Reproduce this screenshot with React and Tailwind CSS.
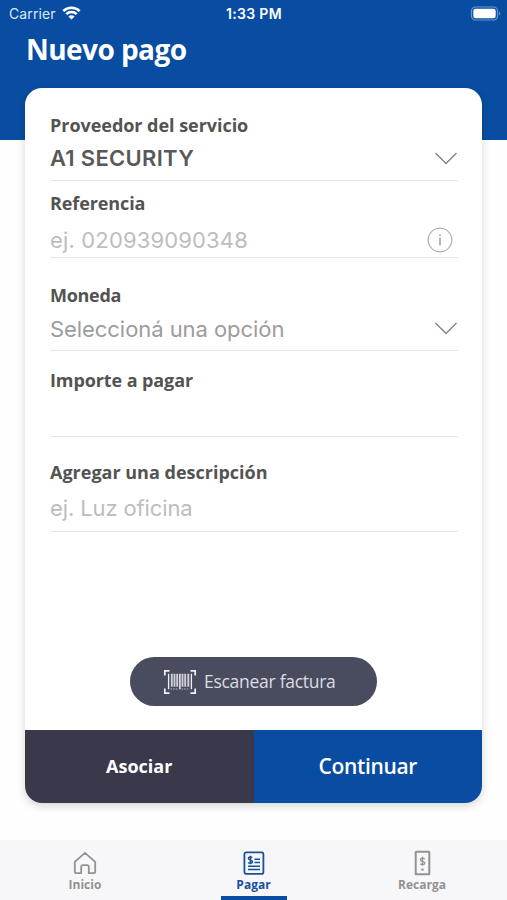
const brand = "font-['Open_Sans','Noto_Sans',sans-serif]";

function Chevron() {
  return (
    <svg className="h-4 w-6 shrink-0" viewBox="0 0 24 16" fill="none" stroke="#868686" strokeWidth="1.5">
      <path d="M1.5 3 12 13.5 22.5 3" />
    </svg>
  );
}

function Info() {
  return (
    <svg className="mr-[5px] h-[26px] w-[26px] shrink-0" viewBox="0 0 26 26" fill="none" stroke="#b4b4b4">
      <circle cx="13" cy="13" r="11.8" strokeWidth="1.3" />
      <path d="M13 10.5v8M13 7.3v1.8" stroke="#969696" strokeWidth="1.4" />
    </svg>
  );
}

function Field({ label, labelClass = "", value, valueClass, rowClass, className, icon }) {
  return (
    <div className={`shrink-0 border-b border-[#e6e6e6] ${className}`}>
      <div className={`h-5 text-[18px] leading-5 font-bold whitespace-nowrap text-[#535353] ${labelClass}`}>
        <span>{label}</span>
      </div>
      <div className={`flex h-7 items-center justify-between font-['Inter',sans-serif] text-[22px] leading-7 whitespace-nowrap ${rowClass}`}>
        <span className={valueClass}>{value}</span>
        {icon}
      </div>
    </div>
  );
}

function StatusBar() {
  return (
    <div className="grid h-7 grid-cols-3 items-center pr-[6px] pl-[9px] font-['Inter',sans-serif] text-[14px] leading-7 text-white">
      <div className="flex items-center gap-[6px]">
        <span className="tracking-[0.1px] text-[#dce8f8]">Carrier</span>
        <svg className="-mt-[2px] h-[14px] w-[19px]" viewBox="0 0 19 14" fill="none" stroke="#fff" strokeWidth="2.5">
          <path d="M1.3 5.1a11.6 11.6 0 0 1 16.4 0M4.3 8.1a7.4 7.4 0 0 1 10.4 0" />
          <path d="M9.5 13.6 6.4 10.5a4.4 4.4 0 0 1 6.2 0z" fill="#fff" stroke="none" />
        </svg>
      </div>
      <span className="-ml-[2px] text-center text-[14px] font-semibold tracking-[0.3px]">1:33 PM</span>
      <svg className="-mt-px h-[15px] w-[31px] justify-self-end" viewBox="0 0 31 15" fill="none">
        <rect x="1.5" y="1" width="26" height="13" rx="4" stroke="#6c96cb" strokeWidth="1.2" />
        <rect x="3.3" y="2.8" width="22.4" height="9.4" rx="2.2" fill="#fff" />
        <path d="M29 5.3c1.6.7 1.6 3.7 0 4.4z" fill="#6c96cb" />
      </svg>
    </div>
  );
}

function ScanIcon() {
  return (
    <svg className="h-[26px] w-[34px]" viewBox="0 0 34 26" fill="none" stroke="#eeeef4">
      <path d="M1.8 6.5V1.8H6.5M27.5 1.8h4.7v4.7M32.2 19.5v4.7h-4.7M6.5 24.2H1.8v-4.7" strokeWidth="1.7" />
      <path d="M5.6 4.8v15.4M28.4 4.8v15.4" strokeWidth="1.3" />
      <path d="M8.8 4.8v13M11.5 4.8v13M14.2 4.8v13M19.5 4.8v13M22.2 4.8v13M25.3 4.8v13" strokeWidth="1.9" stroke="#cfcfda" />
      <path d="M16.9 4.8v15.4" strokeWidth="1.5" />
      <path d="M7.5 20h8M18.5 20h8" strokeWidth="1" strokeDasharray="1.6 1" stroke="#b5b5c3" />
    </svg>
  );
}

function HomeIcon() {
  return (
    <svg className="h-6 w-6" viewBox="0 0 24 24" fill="none" stroke="#929292" strokeWidth="1.8" strokeLinejoin="round">
      <path d="M1.8 10.8 12 1.8l10.2 9v10.2a1.2 1.2 0 0 1-1.2 1.2h-5.2v-6.2a1.8 1.8 0 0 0-1.8-1.8h-4a1.8 1.8 0 0 0-1.8 1.8v6.2H3a1.2 1.2 0 0 1-1.2-1.2z" />
    </svg>
  );
}

function PayIcon() {
  return (
    <svg className="h-6 w-6" viewBox="0 0 24 24" fill="none" stroke="#17509f" strokeWidth="1.8">
      <rect x="2.4" y="1.3" width="19" height="21.6" rx="2" />
      <path d="M10.3 6.6C8.8 5.4 6.3 5.8 6.4 7.5c.1 1.7 3.9 1.4 4 3.2.1 1.8-2.8 2-4.3.8M8.4 4.7v8.6" strokeWidth="1.5" />
      <path d="M12.5 8.2H18M12.5 11.5H18M6 15.2h12M6 18.5h12" strokeWidth="1.6" />
    </svg>
  );
}

function TopUpIcon() {
  return (
    <svg className="h-[26px] w-[17px]" viewBox="0 0 17 26" fill="none" stroke="#929292">
      <rect x="1.7" y="1.7" width="13.6" height="22.6" rx="0.6" strokeWidth="2" />
      <path d="M10.7 8.9C9.3 7.6 6.3 7.9 6.4 9.7c.1 1.8 4.2 1.4 4.3 3.3.1 1.9-2.9 2.2-4.5.8M8.5 6.8v9" strokeWidth="1.3" />
      <path d="M7.3 19.6h2.4" strokeWidth="2" />
    </svg>
  );
}

function Tab({ icon, label, active }) {
  return (
    <div className={`relative flex w-[168.5px] flex-col items-center ${active ? "text-[#17509f]" : "text-[#929292]"}`}>
      <div className="mt-[10px] flex h-[26px] items-center">{icon}</div>
      <span className="mt-px h-4 text-[12px] leading-4 font-bold">{label}</span>
      {active && <div className="absolute bottom-0 h-[4px] w-[66px] bg-[#0a4ea3]" />}
    </div>
  );
}

export default function App() {
  return (
    <div className={`flex h-[900px] w-[507px] flex-col overflow-hidden bg-[linear-gradient(#084da2_140px,#fefefe_140px)] ${brand}`}>
      <StatusBar />
      <h1 className="ml-[26px] h-[60px] text-[28px] leading-[42px] font-bold tracking-[-0.55px] whitespace-nowrap text-white">
        <span>Nuevo pago</span>
      </h1>
      <main className="mx-[25px] flex h-[715px] shrink-0 flex-col overflow-hidden rounded-[17px] bg-white shadow-[0_3px_8px_rgba(0,0,0,0.16)]">
        <div className="flex flex-1 flex-col pr-[24px] pl-[25px]">
          <Field label="Proveedor del servicio" labelClass="tracking-[-0.04px]" value="A1 SECURITY" className="h-[93px] pt-[27px]" rowClass="mt-[9px]" valueClass="font-semibold tracking-[0.3px] text-[#585858]" icon={<Chevron />} />
          <Field label="Referencia" labelClass="tracking-[-0.1px]" value="ej. 020939090348" className="h-[77px] pt-[12px]" rowClass="mt-[13px]" valueClass="-mt-px tracking-[0.15px] text-[#bdbdbd]" icon={<Info />} />
          <Field label="Moneda" labelClass="tracking-[-0.3px]" value="Seleccioná una opción" className="h-[93px] pt-[27px]" rowClass="mt-[9px]" valueClass="mt-px tracking-[-0.06px] text-[#9c9c9c]" icon={<Chevron />} />
          <Field label="Importe a pagar" labelClass="tracking-[-0.1px]" value="" className="h-[86px] pt-[19px]" rowClass="mt-[9px]" />
          <Field label="Agregar una descripción" value="ej. Luz oficina" className="h-[95px] pt-[25px]" rowClass="mt-[12px]" valueClass="tracking-[-0.12px] text-[#bdbdbd]" />
          <button className="mt-[125px] -ml-px flex h-[49px] w-[247px] shrink-0 items-center self-center rounded-full bg-[#494b5e] pl-[33px] text-[17.5px] whitespace-nowrap text-[#dcdce4]">
            <ScanIcon />
            <span className="ml-[7px] tracking-[-0.28px]">Escanear factura</span>
          </button>
        </div>
        <div className="grid h-[73px] shrink-0 grid-cols-2 text-white">
          <button className="bg-[#3a394c] text-[18px] font-bold">
            <span>Asociar</span>
          </button>
          <button className="bg-[#084da2] text-[21px] font-semibold tracking-[-0.35px]">
            <span>Continuar</span>
          </button>
        </div>
      </main>
      <nav className="mt-[37px] flex h-[60px] shrink-0 justify-center bg-[#f7f7f9]">
        <Tab icon={<HomeIcon />} label="Inicio" />
        <Tab icon={<PayIcon />} label="Pagar" active />
        <Tab icon={<TopUpIcon />} label="Recarga" />
      </nav>
    </div>
  );
}
